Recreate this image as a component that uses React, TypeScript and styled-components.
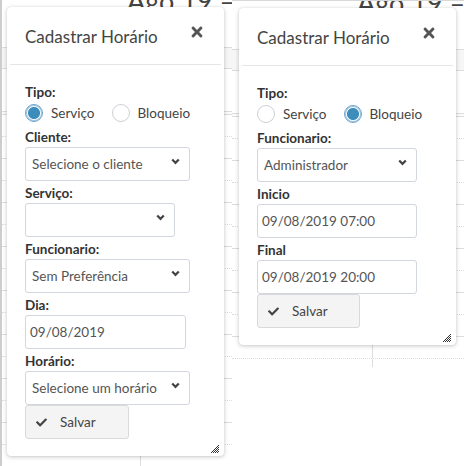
import React from 'react';
import styled, { createGlobalStyle } from 'styled-components';
import { FaCheck, FaTimes } from 'react-icons/fa';

const Global = createGlobalStyle`
  html, body { margin: 0; padding: 0; background: #fff; }
  body { font-family: Lato, "Open Sans", sans-serif; color: #333; }
  * { box-sizing: border-box; }
`;

const Stage = styled.div`
  display: flex;
  align-items: flex-start;
  width: 464px;
  height: 466px;
  overflow: hidden;
  background: #fff;
`;

const Shot = styled.div<{ $side: 'left' | 'right' }>`
  position: relative;
  flex: 0 0 232px;
  width: 232px;
  height: ${p => (p.$side === 'left' ? '466px' : '367px')};
  overflow: hidden;
  border-left: ${p => (p.$side === 'left' ? '2px solid #cdcdcd' : '0')};
  border-top: ${p => (p.$side === 'right' ? '1px solid #d8d8d8' : '0')};
  padding-top: ${p => (p.$side === 'right' ? '1px' : '0')};
  --split: ${p => (p.$side === 'left' ? '138px' : '140px')};
`;

/* ---------- calendar background ---------- */
const Calendar = styled.div`
  display: flex;
  flex-direction: column;
`;

const CalTitleBar = styled.div`
  height: 47px;
`;

const CalTitle = styled.h2`
  margin: -13px 0 0 125px;
  font-size: 27px;
  line-height: 27px;
  font-weight: 400;
  color: #444;
  white-space: nowrap;
`;

const DayHeader = styled.div`
  height: 22px;
  border-top: 1px solid #ddd;
  border-bottom: 1px solid #ddd;
  background: #f6f6f6;
`;

const AllDay = styled.div`
  height: 42px;
`;

const Divider = styled.div`
  height: 4px;
  border-top: 1px solid #ddd;
  border-bottom: 1px solid #ddd;
  background: #fbfbfb;
`;

const Slot = styled.div<{ $minor: boolean }>`
  display: grid;
  grid-template-columns: var(--split) 1fr;
  height: 22px;
  border-bottom: 1px ${p => (p.$minor ? 'dotted' : 'solid')} #ddd;
`;

const SlotCell = styled.div`
  border-left: 1px solid #ddd;
`;

/* ---------- popover ---------- */
const Popover = styled.div<{ $left: number }>`
  position: absolute;
  top: 7px;
  left: ${p => p.$left}px;
  width: 217px;
  padding: 3px;
  background: #fff;
  border-radius: 4px;
  box-shadow: 0 1px 4px rgba(0, 0, 0, 0.22), 0 0 1px rgba(0, 0, 0, 0.15);
`;

const Header = styled.div`
  display: flex;
  justify-content: space-between;
  align-items: flex-start;
  height: 55px;
  padding: 15px 16px 0 15px;
  border-bottom: 1px solid #e6e6e6;
`;

const Title = styled.h4`
  margin: 0;
  font-size: 17px;
  line-height: 23px;
  font-weight: 400;
  color: #444;
`;

const Close = styled.span`
  display: flex;
  margin-top: -1px;
  color: #555;
`;

const Body = styled.div`
  display: flex;
  flex-direction: column;
  align-items: flex-start;
  padding: 17px 12px 14px 15px;
`;

const Label = styled.label`
  display: block;
  margin-top: 2px;
  font-size: 13.5px;
  line-height: 20px;
  font-weight: 700;
  color: #333;
  &:first-child { margin-top: 0; }
`;

const RadioRow = styled.div`
  display: flex;
  align-items: center;
  gap: 17px;
  height: 20px;
  margin: 1px 0 2px;
`;

const RadioOption = styled.span`
  display: flex;
  align-items: center;
  gap: 8px;
  font-size: 13.5px;
  color: #444;
`;

const RadioDot = styled.span<{ $on: boolean }>`
  width: 18px;
  height: 18px;
  border-radius: 50%;
  border: 1px solid ${p => (p.$on ? '#6aa5ce' : '#ccd0d6')};
  background: ${p =>
    p.$on ? 'radial-gradient(circle, #3c8dbc 0 5.6px, #fff 6.4px)' : '#fff'};
  box-shadow: ${p => (p.$on ? 'inset 0 0 0 1px #9cc4df' : 'none')};
`;

const Control = styled.div<{ $w: number }>`
  display: flex;
  align-items: center;
  justify-content: space-between;
  width: ${p => p.$w}px;
  height: 34px;
  border: 1px solid #d2d6de;
  border-radius: 3px;
  background: #fff;
  font-size: 13.5px;
  color: #555;
  white-space: nowrap;
`;

const SelectBox = styled(Control)`
  padding: 0 9px 0 6px;
`;

const InputBox = styled(Control)`
  padding: 0 4px;
`;

const Chevron = styled.svg`
  flex: 0 0 auto;
  margin-top: -6px;
`;

const SaveButton = styled.button<{ $w: number }>`
  display: flex;
  align-items: center;
  gap: 13px;
  width: ${p => p.$w}px;
  height: 34px;
  padding: 0 10px;
  border: 1px solid #d9d9d9;
  border-radius: 3px;
  background: #f4f4f4;
  font-family: inherit;
  font-size: 13.5px;
  color: #444;
`;

const Grip = styled.svg`
  position: absolute;
  right: 5px;
  bottom: 3px;
`;

const ChevronIcon = () => (
  <Chevron width="9" height="7" viewBox="0 0 9 7">
    <polyline points="1.2,1.4 4.5,4.8 7.8,1.4" fill="none" stroke="#444" strokeWidth="2.2" />
  </Chevron>
);

const Select = ({ w, text }: { w: number; text?: string }) => (
  <SelectBox $w={w}>
    <span>{text ?? ''}</span>
    <ChevronIcon />
  </SelectBox>
);

const Radios = ({ selected }: { selected: 0 | 1 }) => (
  <RadioRow>
    <RadioOption>
      <RadioDot $on={selected === 0} />
      Serviço
    </RadioOption>
    <RadioOption>
      <RadioDot $on={selected === 1} />
      Bloqueio
    </RadioOption>
  </RadioRow>
);

const ResizeGrip = () => (
  <Grip width="8" height="8" viewBox="0 0 8 8">
    {[0, 1, 2, 3, 4, 5, 6, 7].map(i =>
      [0, 1, 2, 3, 4, 5, 6, 7]
        .filter(j => i + j >= 7 && (i + j) % 2 === 1)
        .map(j => <rect key={`${i}-${j}`} x={i} y={j} width="1" height="1" fill="#333" />)
    )}
  </Grip>
);

const Save = ({ w }: { w: number }) => (
  <SaveButton $w={w}>
    <FaCheck size={11} />
    Salvar
  </SaveButton>
);

const CalendarBg = ({ slots }: { slots: number }) => (
  <Calendar>
    <CalTitleBar>
      <CalTitle>Ago 19 –</CalTitle>
    </CalTitleBar>
    <DayHeader />
    <AllDay />
    <Divider />
    {Array.from({ length: slots }).map((_, i) => (
      <Slot key={i} $minor={i % 2 === 0}>
        <div />
        <SlotCell />
      </Slot>
    ))}
  </Calendar>
);

const PopHeader = () => (
  <Header>
    <Title>Cadastrar Horário</Title>
    <Close>
      <FaTimes size={16} />
    </Close>
  </Header>
);

export default function App() {
  return (
    <>
      <Global />
      <Stage>
        <Shot $side="left">
          <CalendarBg slots={16} />
          <Popover $left={5}>
            <PopHeader />
            <Body>
              <Label>Tipo:</Label>
              <Radios selected={0} />
              <Label>Cliente:</Label>
              <Select w={165} text="Selecione o cliente" />
              <Label>Serviço:</Label>
              <Select w={150} />
              <Label>Funcionario:</Label>
              <Select w={165} text="Sem Preferência" />
              <Label>Dia:</Label>
              <InputBox $w={161}>09/08/2019</InputBox>
              <Label>Horário:</Label>
              <Select w={165} text="Selecione um horário" />
              <Save w={104} />
            </Body>
            <ResizeGrip />
          </Popover>
        </Shot>
        <Shot $side="right">
          <CalendarBg slots={12} />
          <Popover $left={7}>
            <PopHeader />
            <Body>
              <Label>Tipo:</Label>
              <Radios selected={1} />
              <Label>Funcionario:</Label>
              <Select w={160} text="Administrador" />
              <Label>Inicio</Label>
              <InputBox $w={160}>09/08/2019 07:00</InputBox>
              <Label>Final</Label>
              <InputBox $w={160}>09/08/2019 20:00</InputBox>
              <Save w={103} />
            </Body>
            <ResizeGrip />
          </Popover>
        </Shot>
      </Stage>
    </>
  );
}
